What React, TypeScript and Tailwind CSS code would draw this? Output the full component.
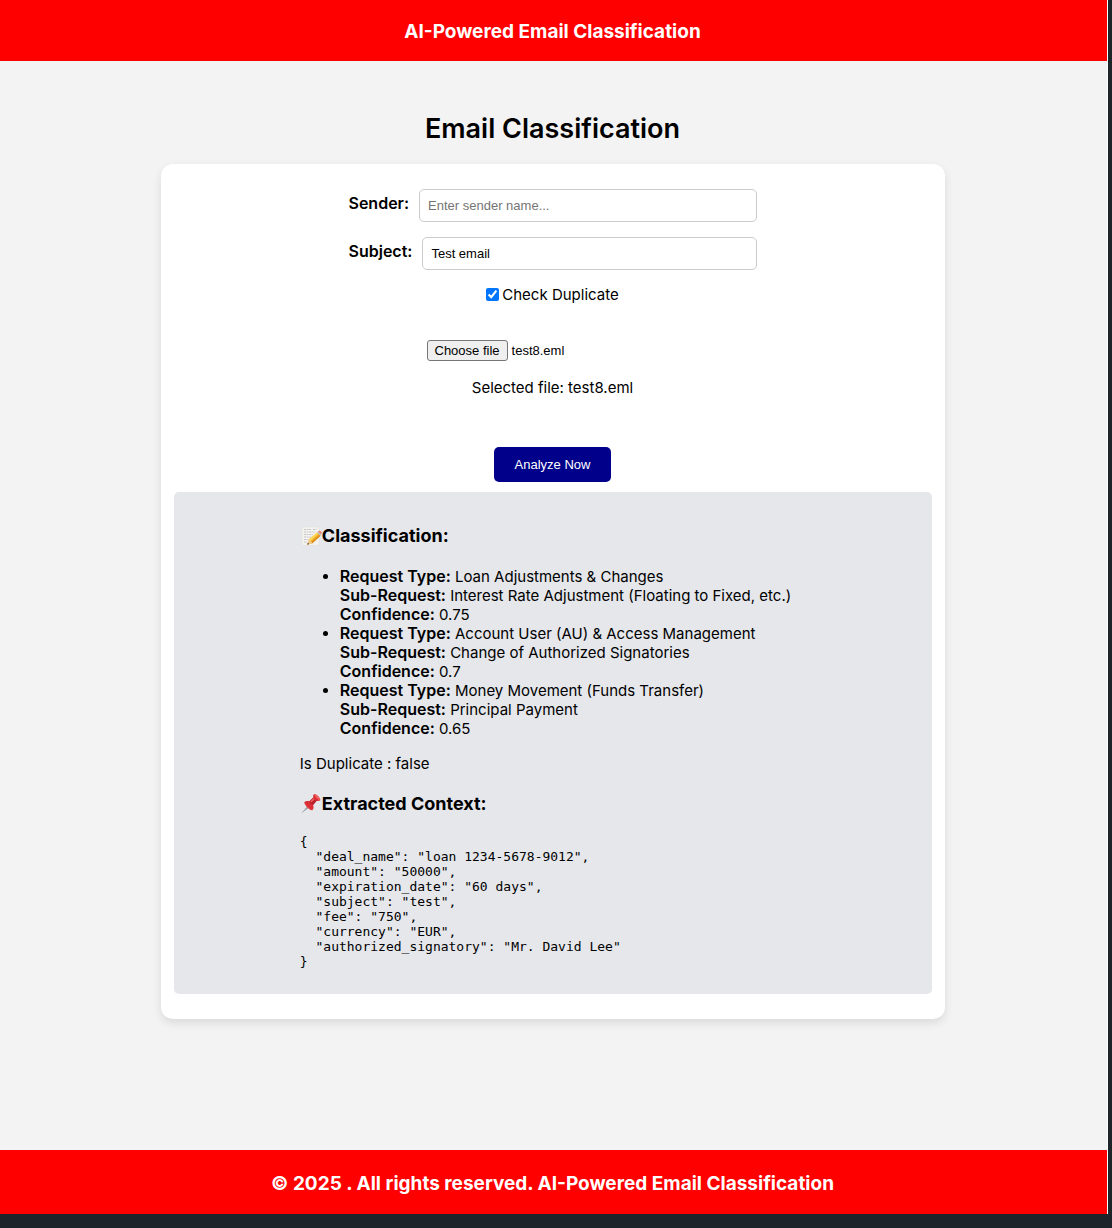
import { useState } from "react";

const results = [
  {
    type: "Loan Adjustments & Changes",
    sub: "Interest Rate Adjustment (Floating to Fixed, etc.)",
    confidence: "0.75",
  },
  {
    type: "Account User (AU) & Access Management",
    sub: "Change of Authorized Signatories",
    confidence: "0.7",
  },
  {
    type: "Money Movement (Funds Transfer)",
    sub: "Principal Payment",
    confidence: "0.65",
  },
];

const context = {
  deal_name: "loan 1234-5678-9012",
  amount: "50000",
  expiration_date: "60 days",
  subject: "test",
  fee: "750",
  currency: "EUR",
  authorized_signatory: "Mr. David Lee",
};

function MemoIcon() {
  return (
    <svg viewBox="0 0 22 22" className="h-[22px] w-[22px] shrink-0" aria-hidden="true">
      <rect x="2" y="2" width="17" height="18.5" rx="0.6" fill="#f3f2f0" stroke="#dddcda" strokeWidth="0.5" />
      <g stroke="#b4b6b9" strokeWidth="0.7" strokeDasharray="2.4 0.7 1.4 0.6">
        <path d="M4 4.5h7M13 4.5h3.5M4 7h11M4 9.5h9M4 12h7M4 14.5h4M4 17h3" />
      </g>
      <path d="M7.2 19.8l1.7-5.2 8.2-7.2 3.4 3.4-8 7.4z" fill="#f4b62c" />
      <path d="M8.9 14.6l8.2-7.2 1.2 1.2-8.2 7.3z" fill="#ffd95a" />
      <path d="M11.3 17l8.1-7.3 1.1 1.100-8 7.400z" fill="#d98b1c" />
      <path d="M18 6.600l.7-.6c1.500-1.200 4 1 2.800 2.800l-.7.8z" fill="#e98572" />
      <path d="M17.100 7.400l.9-.8 2.900 3-.9.9z" fill="#b7b9bb" />
      <path d="M7.200 19.800l1.700-5.200 3.600 3.600z" fill="#edc990" />
      <path d="M7.200 19.800l.6-2 1.500 1.300z" fill="#4b4640" />
    </svg>
  );
}

function PinIcon() {
  return (
    <svg viewBox="0 0 22 22" className="h-[22px] w-[22px] shrink-0" aria-hidden="true">
      <path d="M1.100 20.400L8.600 12l1.600 1.500z" fill="#8d969d" />
      <path d="M4.200 9.200c1.700-1.600 3.500-1.500 5.200-.9l4-3.800c-.5-1.600-.2-2.700.8-3.600 3 .6 5.500 3.100 6.200 6.100-1 1-2.200 1.200-3.600.8l-3.700 4.100c.8 2 .7 3.800-.9 5.400C8.500 16.300 5.300 13.200 4.200 9.200z" fill="#d92f35" />
      <path d="M9.400 8.300l4-3.800c.6 1.400 1.700 2.600 3.200 3.300l-3.700 4.100c-1.600-.7-2.800-1.900-3.500-3.600z" fill="#b7212b" />
      <path d="M10.300 8.200l3.300-3.100 1 1.300-3.300 3.200z" fill="#f05a59" />
      <path d="M14.200.9c3 .6 5.500 3.100 6.200 6.100-2.500-.3-5.600-3.200-6.200-6.100z" fill="#f26161" />
      <path d="M4.200 9.200c1.100 3.600 4 6.900 8 8.100-3.700-2.300-6.200-4.900-8-8.100z" fill="#ef6362" />
    </svg>
  );
}

export default function App() {
  const [sender, setSender] = useState("");
  const [subject, setSubject] = useState("Test email");
  const [duplicate, setDuplicate] = useState(true);
  const [fileName, setFileName] = useState("test8.eml");

  return (
    <div className="min-h-screen bg-[#1d252b] pr-1 pb-3.5 font-['Inter',sans-serif] text-[15px] leading-[19px] text-black">
      <div className="flex min-h-[calc(100vh-14px)] flex-col border-r border-white bg-[#f3f3f3]">
        <header className="bg-[#ff0000] pt-[19px] pr-0.5 pb-[17px] text-center text-[19px] leading-[25px] font-bold text-white">
          AI-Powered Email Classification
        </header>

        <main className="flex flex-1 flex-col items-center pt-[51px] pr-[18px] pl-4">
          <h1 className="text-[27px] leading-[34px] font-semibold">Email Classification</h1>

          <section className="mt-[18px] w-full max-w-[784px] rounded-xl bg-white px-[13px] pt-[25px] pb-[25px] shadow-[0_4px_10px_rgba(0,0,0,0.1)]">
            <form className="flex flex-col items-center" onSubmit={(e) => e.preventDefault()}>
              <div className="flex w-full max-w-[408px] flex-col gap-[15px]">
                <div className="flex gap-2.5">
                  <label htmlFor="sender" className="pt-[5px] text-base leading-[19px] font-semibold">
                    Sender:
                  </label>
                  <input
                    id="sender"
                    type="text"
                    value={sender}
                    onChange={(e) => setSender(e.target.value)}
                    placeholder="Enter sender name..."
                    className="h-[33px] min-w-0 flex-1 rounded-[5px] border border-[#cccccc] bg-white px-2 font-['Liberation_Sans',sans-serif] text-[13px] placeholder:text-[#757575]"
                  />
                </div>
                <div className="flex gap-2.5">
                  <label htmlFor="subject" className="pt-[5px] text-base leading-[19px] font-semibold">
                    Subject:
                  </label>
                  <input
                    id="subject"
                    type="text"
                    value={subject}
                    onChange={(e) => setSubject(e.target.value)}
                    className="h-[33px] min-w-0 flex-1 rounded-[5px] border border-[#cccccc] bg-white px-2 font-['Liberation_Sans',sans-serif] text-[13px]"
                  />
                </div>
              </div>

              <label className="mt-[15px] flex items-center gap-[3px]">
                <input
                  type="checkbox"
                  checked={duplicate}
                  onChange={(e) => setDuplicate(e.target.checked)}
                  className="h-[13px] w-[13px]"
                />
                Check Duplicate
              </label>

              <div className="mt-9 flex w-[252px] items-center gap-1 font-['Liberation_Sans',sans-serif] text-[13px]">
                <input
                  id="file"
                  type="file"
                  className="peer sr-only"
                  onChange={(e) => setFileName(e.target.files?.[0]?.name ?? fileName)}
                />
                <label
                  htmlFor="file"
                  className="rounded-[3px] border border-[#767676] bg-[#efefef] px-[7px] peer-focus-visible:outline-2"
                >
                  Choose file
                </label>
                <span>{fileName}</span>
              </div>

              <p className="mt-[17px]">Selected file: {fileName}</p>

              <button
                type="submit"
                className="mt-[50px] h-[35px] rounded-[5px] bg-[#00008b] px-[21px] font-['Liberation_Sans',sans-serif] text-[13px] text-white"
              >
                Analyze Now
              </button>
            </form>

            <div className="mt-2.5 flex justify-center rounded-[5px] bg-[#e5e7eb] pt-[33px] pb-[25px]">
              <div className="w-2/3">
                <h2 className="flex items-center text-[18px] leading-[22px] font-bold">
                  <MemoIcon />
                  Classification:
                </h2>
                <ul className="mt-5 list-disc pl-10">
                  {results.map((r) => (
                    <li key={r.type}>
                      <strong className="text-base leading-[19px] font-semibold">Request Type:</strong> {r.type}
                      <br />
                      <strong className="text-base leading-[19px] font-semibold">Sub-Request:</strong> {r.sub}
                      <br />
                      <strong className="text-base leading-[19px] font-semibold">Confidence:</strong> {r.confidence}
                    </li>
                  ))}
                </ul>
                <p className="mt-4">Is Duplicate : false</p>
                <h2 className="mt-5 flex items-center text-[18px] leading-[22px] font-bold">
                  <PinIcon />
                  Extracted Context:
                </h2>
                <pre className="mt-[19px] font-['DejaVu_Sans_Mono',monospace] text-[13px] leading-[15px] whitespace-pre-wrap">
                  {JSON.stringify(context, null, 2)}
                </pre>
              </div>
            </div>
          </section>
        </main>

        <footer className="mt-8 bg-[#ff0000] pt-[21px] pr-0.5 pb-[18px] text-center text-[19px] leading-[25px] font-bold text-white">
          © 2025 . All rights reserved. AI-Powered Email Classification
        </footer>
      </div>
    </div>
  );
}
